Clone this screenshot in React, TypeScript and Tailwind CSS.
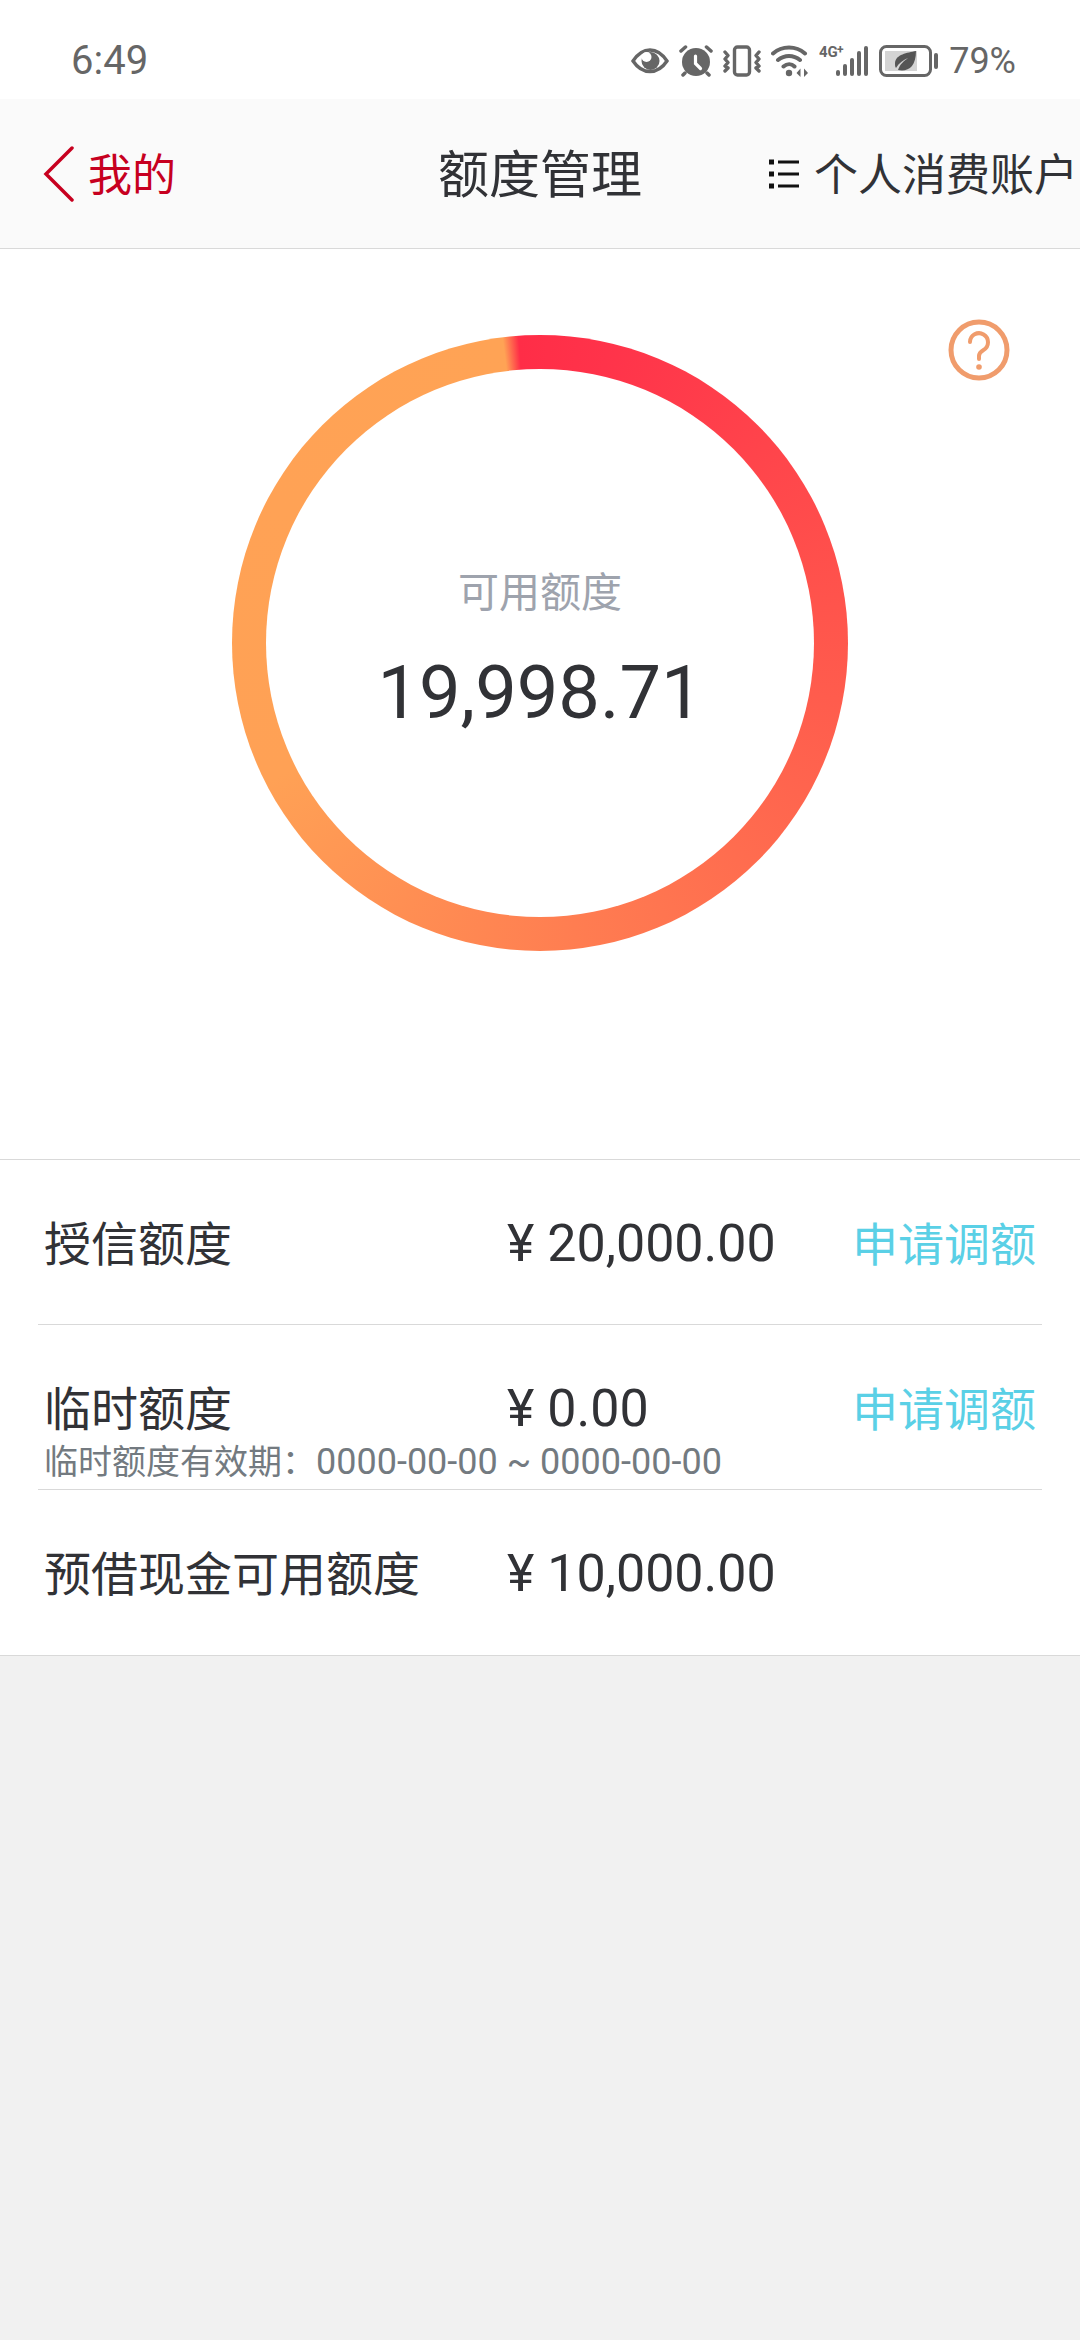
interface QuotaItem {
  label: string;
  amount: string;
  adjustable: boolean;
  validity?: string;
}

const quotas: QuotaItem[] = [
  { label: '授信额度', amount: '20,000.00', adjustable: true },
  { label: '临时额度', amount: '0.00', adjustable: true, validity: '0000-00-00 ~ 0000-00-00' },
  { label: '预借现金可用额度', amount: '10,000.00', adjustable: false },
];

function StatusBar() {
  return (
    <div className="flex h-[99px] items-center justify-between bg-white pt-[22px] pr-16 pl-[71px] font-[Roboto,sans-serif] leading-none text-[#666]">
      <span className="text-[40px]">6:49</span>
      <div className="flex items-center gap-[10px]">
        <svg width="38" height="32" viewBox="0 0 38 32" aria-hidden="true">
          <path d="M2 16C7 8.500 13 5 19 5s12 3.500 17 11c-5 7.500-11 10.500-17 10.500S7 23.500 2 16z" fill="none" stroke="#666" strokeWidth="3.400" />
          <circle cx="19.500" cy="16" r="9" fill="#666" />
          <circle cx="15.500" cy="12" r="5" fill="#fff" />
        </svg>
        <svg width="34" height="32" viewBox="0 0 34 32" aria-hidden="true">
          <circle cx="17" cy="17" r="14" fill="#666" />
          <path d="M2 6l4.500-4M32 6l-4.500-4M6 28l-2 2M28 28l2 2" stroke="#666" strokeWidth="3.500" strokeLinecap="round" />
          <path d="M16.500 11v7.500l5 5" fill="none" stroke="#fff" strokeWidth="3.200" strokeLinecap="round" />
        </svg>
        <svg width="38" height="32" viewBox="0 0 38 32" fill="none" stroke="#666" strokeWidth="3.400" aria-hidden="true">
          <rect x="11.500" y="2" width="15" height="28" rx="3" />
          <path d="M2 7l3 3.500L2 14l3 3.500L2 21l3 2-3 3M36 7l-3 3.500 3 3.500-3 3.500 3 3.500-3 2 3 3" strokeLinecap="round" strokeLinejoin="round" />
        </svg>
        <svg width="38" height="32" viewBox="0 0 38 32" fill="none" stroke="#666" strokeWidth="4" strokeLinecap="round" aria-hidden="true">
          <path d="M2 8.500c9-8 23-8 32 0M7 15c6.500-5.500 15.500-5.500 22 0M12.500 21.500c3.500-3 8-3 11 0" />
          <circle cx="18" cy="28" r="3.200" fill="#666" stroke="none" />
          <path d="M25.500 28l4-4.500V32zM37 28l-4-4.500V32z" fill="#666" stroke="none" />
        </svg>
        <svg width="50" height="40" viewBox="0 0 50 40" fill="#666" aria-hidden="true">
          <text x="0" y="16" fontSize="15" fontWeight="700">4G</text>
          <text x="18" y="13" fontSize="12" fontWeight="700">+</text>
          <rect x="17" y="29" width="4" height="6" rx="2" />
          <rect x="24" y="23" width="4" height="12" rx="2" />
          <rect x="31" y="17" width="4" height="18" rx="2" />
          <rect x="38" y="10" width="4" height="25" rx="2" />
          <rect x="45" y="5" width="4" height="30" rx="2" />
        </svg>
        <svg width="60" height="32" viewBox="0 0 60 32" aria-hidden="true">
          <rect x="6" y="6" width="32" height="20" fill="#d4d4d4" />
          <rect x="1.500" y="1.500" width="50" height="29" rx="6" fill="none" stroke="#666" strokeWidth="3" />
          <rect x="55" y="8" width="4" height="16" rx="2" fill="#666" />
          <path d="M37 6c-9 2-20 3-21 12 0 2 0 4 1 5 3-5 7-8 12-10-4 3-8 6-10 12 10 2 18-3 18-19z" fill="#555" />
        </svg>
        <span className="text-[36px]">79%</span>
      </div>
    </div>
  );
}

function NavBar() {
  return (
    <header className="grid h-[150px] grid-cols-[1fr_auto_1fr] items-center border-b border-[#d9d9d9] bg-[#fafafa] text-[44px] whitespace-nowrap">
      <button type="button" className="flex items-center gap-3.5 pl-[43px] text-[#c7001f]">
        <svg width="31" height="56" viewBox="0 0 31 56" fill="none" stroke="currentColor" strokeWidth="3.500" strokeLinecap="round" aria-hidden="true">
          <path d="M29 2L3 28l26 26" />
        </svg>
        我的
      </button>
      <h1 className="text-[51px]">额度管理</h1>
      <button type="button" className="flex items-center justify-end gap-3.5 pr-0.5">
        <svg width="32" height="32" viewBox="0 0 32 32" fill="none" stroke="#111" strokeWidth="3" aria-hidden="true">
          <path d="M10 4h21M10 16h21M10 28h21" />
          <path d="M1 4h5M1 16h5M1 28h5" strokeWidth="5" />
        </svg>
        个人消费账户
      </button>
    </header>
  );
}

function QuotaRing({ amount }: { amount: string }) {
  return (
    <section className="relative flex justify-center bg-white pt-[86px] pb-[208px]">
      <div className="flex size-[616px] rounded-full bg-[conic-gradient(from_-7deg,#ffa355_0deg,#ff2d47_3deg,#ff334a_20deg,#ff544c_90deg,#ff7d51_180deg,#ffa155_250deg,#ffa355_360deg)] p-[34px]">
        <div className="flex flex-1 flex-col items-center rounded-full bg-white pt-[192px]">
          <p className="text-[41px] leading-[60px] text-[#9ea3ad]">可用额度</p>
          <p className="mt-6 font-[Roboto,sans-serif] text-[74px] leading-[96px]">{amount}</p>
        </div>
      </div>
      <button type="button" aria-label="额度说明" className="absolute top-[70px] right-[70px] text-[#f09c6c]">
        <svg width="62" height="62" viewBox="0 0 62 62" fill="none" stroke="currentColor" strokeLinecap="round" aria-hidden="true">
          <circle cx="31" cy="31" r="28" strokeWidth="5" />
          <path d="M22 23a9 9 0 1 1 13.500 8c-3 1.800-4.500 3-4.500 6v3" strokeWidth="4" />
          <circle cx="31" cy="48" r="2.800" fill="currentColor" stroke="none" />
        </svg>
      </button>
    </section>
  );
}

function QuotaRow({ item }: { item: QuotaItem }) {
  return (
    <li className="flex h-[165px] flex-col border-b border-[#d9d9d9] px-[6px] pt-[50px] last:border-b-0">
      <div className="flex h-[66px] items-baseline leading-[66px]">
        <span className="w-[463px] text-[47px]">{item.label}</span>
        <span className="flex-1 font-[Roboto,sans-serif] text-[52px]">¥ {item.amount}</span>
        {item.adjustable && (
          <button type="button" className="text-[46px] text-[#5ad0e6]">
            申请调额
          </button>
        )}
      </div>
      {item.validity && (
        <p className="text-[34px] leading-[40px] text-[#737a80]">
          临时额度有效期：<span className="font-[Roboto,sans-serif] text-[36px]">{item.validity}</span>
        </p>
      )}
    </li>
  );
}

export default function App() {
  return (
    <div className="min-h-screen bg-[#f1f1f1] font-['Noto_Sans','Noto_Sans_CJK_SC',sans-serif] text-[#313236]">
      <StatusBar />
      <NavBar />
      <main>
        <QuotaRing amount="19,998.71" />
        <ul className="border-y border-[#d9d9d9] bg-white px-[38px]">
          {quotas.map((item) => (
            <QuotaRow key={item.label} item={item} />
          ))}
        </ul>
      </main>
    </div>
  );
}
